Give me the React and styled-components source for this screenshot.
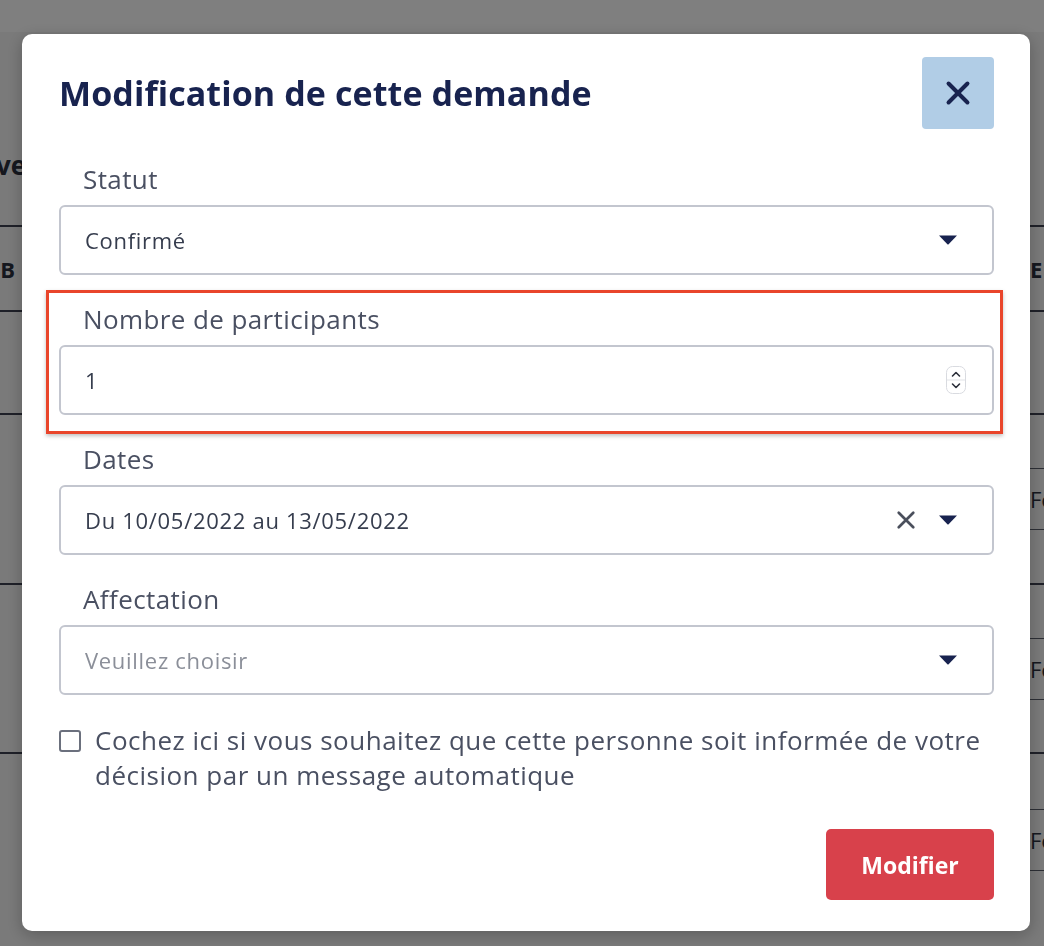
import React from "react";
import styled, { createGlobalStyle } from "styled-components";

const GlobalStyle = createGlobalStyle`
  html, body {
    margin: 0;
    padding: 0;
    width: 1044px;
    height: 946px;
    overflow: hidden;
    font-family: "Open Sans", "Noto Sans", sans-serif;
  }
`;

const Colors = {
  NAVY: "#18234f",
  LABEL: "#4a5062",
  TEXT: "#363d4e",
  BORDER: "#c3c6cf",
  RED: "#d8414b",
  HIGHLIGHT: "#e9452b",
};

const Caret = () => (
  <svg width="20" height="12" viewBox="0 0 20 12">
    <path d="M1 1.5h18L10.6 10.3a1 1 0 0 1-1.2 0z" fill={Colors.NAVY} />
  </svg>
);

const Cross = ({ size = 22, color = Colors.NAVY, weight = 3.2 }) => (
  <svg width={size} height={size} viewBox="0 0 22 22">
    <path
      d="M3 3l16 16M19 3L3 19"
      stroke={color}
      strokeWidth={weight}
      strokeLinecap="round"
    />
  </svg>
);

const Spinner = () => (
  <SpinBox>
    <svg width="20" height="28" viewBox="0 0 20 28">
      <rect x="0.5" y="0.5" width="19" height="27" rx="6" fill="#fff" stroke="#d9dbe0" />
      <line x1="1" y1="14" x2="19" y2="14" stroke="#e1e3e7" />
      <path d="M6.5 10l3.5-3.5 3.5 3.5" fill="none" stroke="#2b2f3a" strokeWidth="1.6" strokeLinecap="round" strokeLinejoin="round" />
      <path d="M6.5 18l3.5 3.5 3.5-3.5" fill="none" stroke="#2b2f3a" strokeWidth="1.6" strokeLinecap="round" strokeLinejoin="round" />
    </svg>
  </SpinBox>
);

const App = () => {
  return (
    <>
      <GlobalStyle />
      <Page>
        <PageHeader />
        <PageBody>
          <PageTitle>ves</PageTitle>
          <Table>
            <TableRow height={85}>
              <LeftCell bold>IB</LeftCell>
              <RightCell bold>E</RightCell>
            </TableRow>
            <TableRow height={103} />
            <TableRow height={170}>
              <LeftCell />
              <RightBox>Fe</RightBox>
            </TableRow>
            <TableRow height={169}>
              <LeftCell />
              <RightBox>Fe</RightBox>
            </TableRow>
            <TableRow height={173}>
              <LeftCell />
              <RightBox>Fe</RightBox>
            </TableRow>
          </Table>
        </PageBody>
      </Page>

      <Overlay>
        <Modal>
          <Header>
            <Title>Modification de cette demande</Title>
            <CloseButton aria-label="Fermer">
              <Cross size={26} weight={3.4} />
            </CloseButton>
          </Header>

          <Form>
            <Field>
              <Label>Statut</Label>
              <Control>
                <Value>Confirmé</Value>
                <Icons>
                  <Caret />
                </Icons>
              </Control>
            </Field>

            <Field highlighted>
              <Label>Nombre de participants</Label>
              <Control>
                <Value>1</Value>
                <Spinner />
              </Control>
            </Field>

            <Field>
              <Label>Dates</Label>
              <Control>
                <Value>Du 10/05/2022 au 13/05/2022</Value>
                <Icons>
                  <Cross size={20} color="#4a4f5c" weight={3} />
                  <Caret />
                </Icons>
              </Control>
            </Field>

            <Field>
              <Label>Affectation</Label>
              <Control>
                <Value placeholder>Veuillez choisir</Value>
                <Icons>
                  <Caret />
                </Icons>
              </Control>
            </Field>
          </Form>

          <CheckRow>
            <CheckBox />
            <CheckText>
              Cochez ici si vous souhaitez que cette personne soit informée de
              votre décision par un message automatique
            </CheckText>
          </CheckRow>

          <Footer>
            <SubmitButton>Modifier</SubmitButton>
          </Footer>
        </Modal>
      </Overlay>
    </>
  );
};

export default App;

/* ---------- page behind the dialog ---------- */

const Page = styled.div`
  position: relative;
  width: 1044px;
  height: 946px;
  overflow: hidden;
  background: #f5f5f5;
`;

const PageHeader = styled.div`
  height: 32px;
  background: #ffffff;
`;

const PageBody = styled.div`
  display: flex;
  flex-direction: column;
`;

const PageTitle = styled.h2`
  margin: 116px 0 0 -4px;
  height: 77px;
  font-family: "Open Sans", sans-serif;
  font-size: 26px;
  font-weight: 700;
  color: #2a2f3d;
  line-height: 34px;
`;

const Table = styled.div`
  display: flex;
  flex-direction: column;
`;

const TableRow = styled.div`
  height: ${(p) => p.height}px;
  border-top: 2px solid #3d4150;
  box-sizing: border-box;
  display: flex;
  align-items: center;
  justify-content: space-between;
`;

const LeftCell = styled.div`
  margin-left: -8px;
  font-size: 22px;
  font-weight: ${(p) => (p.bold ? 700 : 400)};
  color: #2a2f3d;
  letter-spacing: 1px;
`;

const RightCell = styled.div`
  width: 14px;
  font-size: 22px;
  font-weight: ${(p) => (p.bold ? 700 : 400)};
  color: #2a2f3d;
`;

const RightBox = styled.div`
  width: 16px;
  height: 62px;
  box-sizing: border-box;
  border-top: 1px solid #5a5e6a;
  border-bottom: 1px solid #5a5e6a;
  display: flex;
  align-items: center;
  padding-left: 2px;
  font-size: 22px;
  color: #2a2f3d;
  overflow: hidden;
`;

/* ---------- dialog ---------- */

const Overlay = styled.div`
  position: fixed;
  inset: 0;
  background: rgba(0, 0, 0, 0.5);
`;

const Modal = styled.div`
  width: 1008px;
  margin: 34px 0 0 22px;
  box-sizing: border-box;
  padding: 23px 36px 31px 37px;
  background: #ffffff;
  border-radius: 10px;
  box-shadow: 0 4px 16px rgba(0, 0, 0, 0.25);
  font-family: "Open Sans", "Noto Sans", sans-serif;
`;

const Header = styled.div`
  display: flex;
  align-items: center;
  justify-content: space-between;
  height: 72px;
`;

const Title = styled.h1`
  margin: 0;
  font-size: 34px;
  font-weight: 700;
  color: ${Colors.NAVY};
  letter-spacing: 0.1px;
`;

const CloseButton = styled.button`
  width: 72px;
  height: 72px;
  border: none;
  border-radius: 4px;
  background: #b1cde6;
  display: flex;
  align-items: center;
  justify-content: center;
  padding: 0;
  cursor: pointer;
`;

const Form = styled.div`
  margin-top: 32px;
  display: flex;
  flex-direction: column;
  gap: 26px;
`;

const Field = styled.div`
  position: relative;
  display: flex;
  flex-direction: column;

  ${(p) =>
    p.highlighted &&
    `
    &::after {
      content: "";
      position: absolute;
      top: -11px;
      left: -13px;
      right: -9px;
      bottom: -19px;
      border: 3px solid ${Colors.HIGHLIGHT};
      box-shadow: 0 2px 4px rgba(0, 0, 0, 0.25);
      pointer-events: none;
    }
  `}
`;

const Label = styled.div`
  padding-left: 24px;
  margin-bottom: 8px;
  font-size: 26px;
  letter-spacing: 0.4px;
  line-height: 36px;
  color: ${Colors.LABEL};
`;

const Control = styled.div`
  height: 70px;
  box-sizing: border-box;
  border: 2px solid ${Colors.BORDER};
  border-radius: 6px;
  display: flex;
  align-items: center;
  justify-content: space-between;
  padding: 0 34px 0 24px;
`;

const Value = styled.span`
  font-size: 22px;
  letter-spacing: 0.7px;
  color: ${(p) => (p.placeholder ? "#8b8f99" : Colors.TEXT)};
`;

const Icons = styled.div`
  display: flex;
  align-items: center;
  gap: 22px;
`;

const SpinBox = styled.div`
  display: flex;
  margin-right: -8px;
`;

const CheckRow = styled.div`
  margin-top: 28px;
  display: flex;
  align-items: flex-start;
  gap: 14px;
`;

const CheckBox = styled.span`
  flex: none;
  width: 22px;
  height: 22px;
  margin-top: 7px;
  box-sizing: border-box;
  border: 2px solid #6b707d;
  border-radius: 3px;
`;

const CheckText = styled.p`
  margin: 0;
  font-size: 26px;
  letter-spacing: 0.5px;
  line-height: 35px;
  color: ${Colors.LABEL};
`;

const Footer = styled.div`
  margin-top: 36px;
  display: flex;
  justify-content: flex-end;
`;

const SubmitButton = styled.button`
  width: 168px;
  height: 71px;
  border: none;
  border-radius: 5px;
  background: ${Colors.RED};
  color: #ffffff;
  font-family: "Open Sans", "Noto Sans", sans-serif;
  font-size: 23px;
  font-weight: 700;
  cursor: pointer;
`;
